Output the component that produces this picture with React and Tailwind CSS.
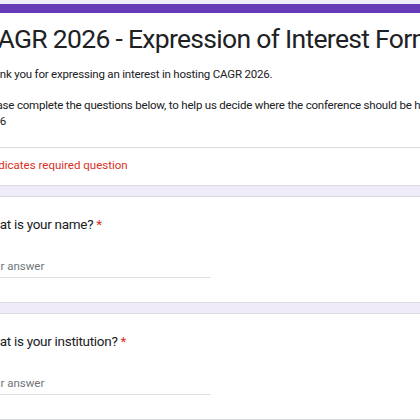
export default function App() {
  return (
    <div className="w-[420px] h-[420px] overflow-hidden bg-[#f0ebf8] font-['Roboto',sans-serif] text-[#202124]">
      <div className="-ml-[44px] w-[600px] pt-[4px] flex flex-col gap-[10px]">
        {/* Header card */}
        <div className="bg-white rounded-lg border border-[#dadce0] border-t-[9px] border-t-[#673ab7]">
          <div className="px-6 pt-[8px] pb-[18px]">
            <h1 className="text-[26.5px] leading-[36px] tracking-[-0.7px] whitespace-nowrap">
              CAGR 2026 - Expression of Interest Form
            </h1>
            <div className="mt-[10px] text-[11.5px] leading-[15.5px] tracking-[-0.2px] whitespace-nowrap">
              <p>Thank you for expressing an interest in hosting CAGR 2026.</p>
              <p className="mt-[15.5px]">
                Please complete the questions below, to help us decide where the conference should be held in
                <br />
                2026
              </p>
            </div>
          </div>
          <div className="border-t border-[#dadce0] px-6 pt-[10px] pb-[12px] text-[11.5px] leading-[15px] text-[#d93025]">
            * Indicates required question
          </div>
        </div>

        <Question label="What is your name?" />
        <Question label="What is your institution?" />
      </div>
    </div>
  );
}

function Question({ label }) {
  return (
    <div className="bg-white rounded-lg border border-[#dadce0] px-6 pt-[17px] pb-[24px]">
      <div className="text-[13.5px] leading-[20px] tracking-[-0.3px]">
        {label} <span className="text-[#d93025]">*</span>
      </div>
      <div className="mt-[24px] w-[230px] border-b border-[#e0e0e0] pb-[3px] text-[11.5px] leading-[16px] text-[#70757a]">
        Your answer
      </div>
    </div>
  );
}
